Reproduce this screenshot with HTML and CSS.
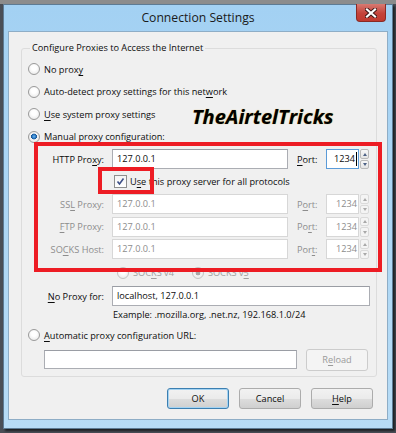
FILE: index.html
```html
<!DOCTYPE html>
<html>
<head>
  <title>Connection Settings</title>
  <link rel="stylesheet" href="styles.css">
</head>
<body>

  <div class="window">
    <div class="titlebar">
      <div class="title">Connection Settings</div>
      <div class="close">
        <svg width="12" height="10" viewBox="0 0 12 10">
          <path d="M2 1.5 L10 8.5 M10 1.5 L2 8.5" stroke="#3a1414" stroke-width="4" stroke-linecap="square"/>
          <path d="M2 1.5 L10 8.5 M10 1.5 L2 8.5" stroke="#fff" stroke-width="2.2" stroke-linecap="square"/>
        </svg>
      </div>
    </div>

    <div class="client">
      <fieldset class="group">
        <legend>Configure Proxies to Access the Internet</legend>

        <div class="option"><span class="radio"></span>No prox<u>y</u></div>
        <div class="option"><span class="radio"></span>Auto-detect proxy settings for this net<u>w</u>ork</div>
        <div class="option"><span class="radio"></span><u>U</u>se system proxy settings</div>
        <div class="option"><span class="radio checked"></span><u>M</u>anual proxy configuration:</div>

        <div class="field">
          <span class="label">HTTP Pro<u>x</u>y:</span>
          <span class="input">127.0.0.1</span>
          <span class="port-label"><u>P</u>ort:</span>
          <span class="port focused">1234<i class="caret"></i></span>
          <span class="spin"><span class="up"></span><span class="down"></span></span>
        </div>

        <div class="share">
          <span class="check">
            <svg width="11" height="11" viewBox="0 0 11 11">
              <path d="M2.5 5.5 L4.5 8 L8.5 2.5" fill="none" stroke="#3d4f87" stroke-width="1.6"/>
            </svg>
          </span>U<u>s</u>e this proxy server for all protocols
        </div>

        <div class="field disabled">
          <span class="label">SS<u>L</u> Proxy:</span>
          <span class="input">127.0.0.1</span>
          <span class="port-label">P<u>o</u>rt:</span>
          <span class="port">1234</span>
          <span class="spin"><span class="up"></span><span class="down"></span></span>
        </div>

        <div class="field disabled">
          <span class="label"><u>F</u>TP Proxy:</span>
          <span class="input">127.0.0.1</span>
          <span class="port-label">Po<u>r</u>t:</span>
          <span class="port">1234</span>
          <span class="spin"><span class="up"></span><span class="down"></span></span>
        </div>

        <div class="field disabled">
          <span class="label">SO<u>C</u>KS Host:</span>
          <span class="input">127.0.0.1</span>
          <span class="port-label">Por<u>t</u>:</span>
          <span class="port">1234</span>
          <span class="spin"><span class="up"></span><span class="down"></span></span>
        </div>

        <div class="socks">
          <span class="radio"></span>SOC<u>K</u>S v4
          <span class="radio checked v5"></span>SOCKS v<u>5</u>
        </div>

        <div class="field noproxy">
          <span class="label"><u>N</u>o Proxy for:</span>
          <span class="input wide">localhost, 127.0.0.1</span>
        </div>

        <div class="example">Example: .mozilla.org, .net.nz, 192.168.1.0/24</div>

        <div class="option auto"><span class="radio"></span><u>A</u>utomatic proxy configuration URL:</div>

        <div class="url-row">
          <span class="input url"></span>
          <span class="button off">R<u>e</u>load</span>
        </div>
      </fieldset>

      <div class="buttons">
        <span class="button default">OK</span>
        <span class="button">Cancel</span>
        <span class="button"><u>H</u>elp</span>
      </div>
    </div>
  </div>

  <!-- annotations drawn over the screenshot -->
  <div class="mark mark-big"></div>
  <div class="mark mark-small"></div>
  <div class="watermark">TheAirtelTricks</div>

</body>
</html>
```

FILE: styles.css
```css
body {
  margin: 0;
  width: 396px;
  height: 433px;
  overflow: hidden;
  background: linear-gradient(to bottom, #8c8c8c 0, #8c8c8c 4px, #4a4f57 4px);
  font-family: "Open Sans", "Noto Sans", sans-serif;
  font-size: 9.2px;
  color: #0c0c0c;
}

u {
  text-decoration-thickness: 1px;
  text-underline-offset: 2px;
}

.window {
  box-sizing: border-box;
  width: 390px;
  height: 425px;
  margin: 4px 0 0 3px;
  padding: 0 4px 8px 4px;
  border: 1px solid #5d7b94;
  background: linear-gradient(to bottom, #a3d1f3, #b7dcf6);
  box-shadow: 2px 2px 2px rgba(0, 0, 0, 0.6);
  display: flex;
  flex-direction: column;
}

.titlebar {
  height: 26px;
  display: flex;
  justify-content: center;
  align-items: center;
  position: relative;
}

.title {
  font-size: 12.2px;
  color: #1a1a1a;
  margin-top: -2px;
}

.close {
  position: absolute;
  top: -1px;
  right: 2px;
  width: 28px;
  height: 17px;
  background: linear-gradient(to bottom, #d87a72, #c4433a 55%, #c0392f);
  border: 1px solid #8a2a24;
  border-top: none;
  border-radius: 0 0 4px 4px;
  display: flex;
  justify-content: center;
  align-items: center;
}

.client {
  flex: 1;
  background: #f0f0f0;
  border: 1px solid #8eadc6;
  padding-top: 8px;
}

.group {
  margin: 0 12px;
  padding: 0 6px 5px 6px;
  border: 1px solid #dcdcdc;
  border-radius: 3px;
}

.group legend {
  padding: 0 2px;
  margin-left: 2px;
  line-height: 16px;
}

.option {
  height: 22.5px;
  display: flex;
  align-items: center;
}

.option:first-of-type {
  margin-top: 2px;
}

.radio {
  box-sizing: border-box;
  width: 12px;
  height: 12px;
  margin-right: 4px;
  border-radius: 50%;
  border: 1px solid #9a9a9a;
  background: radial-gradient(circle at 50% 40%, #ffffff 30%, #e2e2e2 100%);
  flex-shrink: 0;
}

.radio.checked {
  background: radial-gradient(circle at 50% 45%, #6fb4ee 0, #2a78c2 25%, #17508c 38%, #f4f4f4 42%, #e2e2e2 100%);
}

.field {
  height: 22.5px;
  display: flex;
  align-items: center;
}

.label {
  width: 76px;
  margin-right: 8px;
  text-align: right;
  flex-shrink: 0;
}

.input {
  box-sizing: border-box;
  width: 176px;
  height: 20px;
  padding: 0 4px;
  line-height: 18px;
  background: #fff;
  border: 1px solid #abadb3;
  border-top-color: #9a9da4;
}

.port-label {
  width: 29px;
  margin-left: 9px;
}

.port {
  box-sizing: border-box;
  width: 33px;
  height: 20px;
  padding: 0 1px;
  line-height: 18px;
  text-align: right;
  background: #fff;
  border: 1px solid #abadb3;
  position: relative;
}

.port.focused {
  border-color: #5b9bd8;
  padding-right: 3px;
}

.caret {
  position: absolute;
  right: 1px;
  top: 2px;
  width: 1px;
  height: 14px;
  background: #000;
}

.spin {
  margin-left: 1px;
  width: 9px;
  height: 20px;
  display: flex;
  flex-direction: column;
  gap: 1px;
}

.spin span {
  box-sizing: border-box;
  flex: 1;
  border: 1px solid #b9b9b9;
  border-radius: 2px;
  background: linear-gradient(to bottom, #f8f8f8, #e4e4e4);
  display: flex;
  justify-content: center;
  align-items: center;
}

.spin .up::after,
.spin .down::after {
  content: "";
  border-left: 2.5px solid transparent;
  border-right: 2.5px solid transparent;
}

.spin .up::after {
  border-bottom: 3px solid #4d6185;
}

.spin .down::after {
  border-top: 3px solid #4d6185;
}

.disabled {
  color: #8d8d8d;
}

.disabled .input,
.disabled .port {
  border-color: #d7d7d7;
}

.disabled .spin span {
  border-color: #dadada;
  background: #f4f4f4;
}

.disabled .spin .up::after {
  border-bottom-color: #a8a8a8;
}

.disabled .spin .down::after {
  border-top-color: #a8a8a8;
}

.share {
  height: 22.5px;
  padding-left: 86px;
  display: flex;
  align-items: center;
}

.check {
  box-sizing: border-box;
  width: 13px;
  height: 13px;
  margin-right: 3px;
  border: 1px solid #8e8f8f;
  background: linear-gradient(to bottom, #f4f4f4, #ffffff);
  display: flex;
}

.socks {
  height: 22.5px;
  padding-left: 89px;
  padding-top: 2px;
  box-sizing: border-box;
  display: flex;
  align-items: center;
  color: #a0a0a0;
}

.socks .radio {
  border-color: #c4c4c4;
}

.socks .v5 {
  margin-left: 18px;
  background: radial-gradient(circle at 50% 50%, #a8a8a8 0, #a8a8a8 30%, #f4f4f4 38%, #e8e8e8 100%);
}

.noproxy {
  margin-top: 2px;
}

.input.wide {
  width: 258px;
}

.example {
  height: 14px;
  line-height: 14px;
  padding-left: 85px;
}

.option.auto {
  margin-top: 2.5px;
}

.url-row {
  height: 22px;
  margin-top: 2px;
  padding-left: 16px;
  display: flex;
  align-items: center;
}

.input.url {
  width: 253px;
  height: 19px;
  margin-right: 9px;
}

.button {
  box-sizing: border-box;
  width: 62px;
  height: 21px;
  line-height: 19px;
  text-align: center;
  border: 1px solid #acacac;
  border-radius: 3px;
  background: linear-gradient(to bottom, #f2f2f2 0, #ebebeb 50%, #dddddd 51%, #cfcfcf 100%);
}

.button.off {
  height: 22px;
  line-height: 20px;
  color: #9a9a9a;
  border-color: #cccccc;
  background: #f4f4f4;
}

.button.default {
  border-color: #3c7fb1;
  box-shadow: inset 0 0 0 1px #a4d3f2;
}

.buttons {
  margin-top: 11px;
  padding-right: 14px;
  display: flex;
  justify-content: flex-end;
  gap: 10px;
}

.mark {
  position: absolute;
  border: 4px solid #ed1c24;
}

.mark-big {
  left: 34px;
  top: 142px;
  width: 340px;
  height: 122px;
}

.mark-small {
  left: 98px;
  top: 167px;
  width: 48px;
  height: 19px;
}

.watermark {
  position: absolute;
  left: 192px;
  top: 103px;
  font-family: "Open Sans", sans-serif;
  font-weight: bold;
  font-style: italic;
  font-size: 20px;
  color: #000;
  text-shadow: 0 0 1px #c9a43a;
}
```
